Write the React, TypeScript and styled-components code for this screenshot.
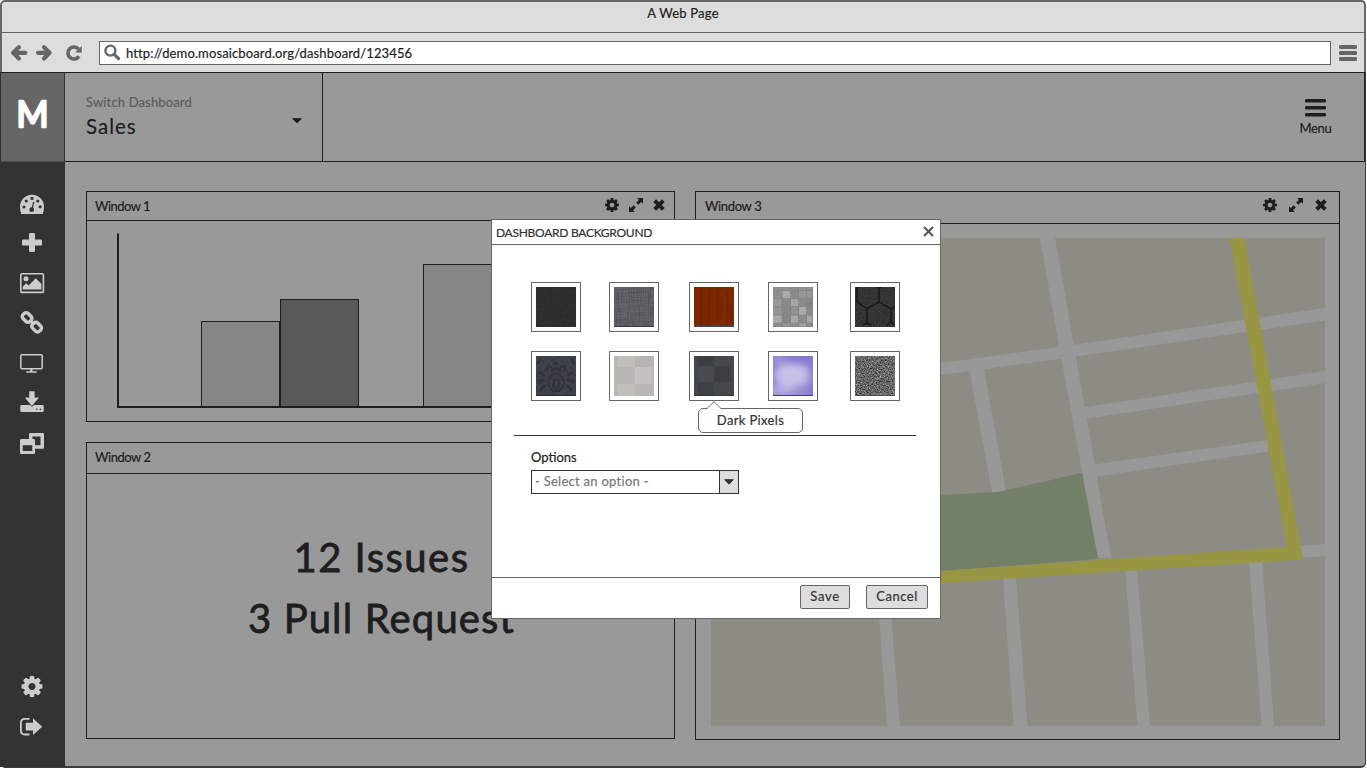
import React from "react";
import styled, { createGlobalStyle } from "styled-components";

const GlobalStyle = createGlobalStyle`
  * { box-sizing: border-box; }
  body { margin: 0; background: #fff; overflow: hidden; }
  svg { display: block; flex: none; }
  filter { color-interpolation-filters: sRGB; }
`;

const ink = "#1e1e1e";

/* ---------- browser frame ---------- */
const Page = styled.div`
  width: 1367px;
  height: 769px;
  position: relative;
  display: flex;
  flex-direction: column;
  font-family: Lato, "Liberation Sans", sans-serif;
  font-size: 13px;
  color: ${ink};
`;
const Chrome = styled.div`
  width: 1366px;
  height: 72px;
  flex: none;
  background: #ddd;
  border: 2px solid #666;
  border-bottom: none;
  border-radius: 5px 5px 0 0;
`;
const TitleBar = styled.div`
  height: 31px;
  border-bottom: 1px solid #666;
  display: flex;
  justify-content: center;
  padding-top: 1px;
`;
const Toolbar = styled.div`
  height: 39px;
  display: flex;
  align-items: center;
  padding: 0 7px 0 9px;
`;
const NavIcons = styled.div`
  display: flex;
  width: 88px;
`;
const UrlBox = styled.div`
  width: 1232px;
  height: 24px;
  margin-right: 8px;
  border: 1px solid #666;
  background: #fff;
  display: flex;
  align-items: center;
  padding-left: 4px;
  gap: 5px;
`;

const Text = styled.span<{ $size?: number; $gap?: number; $color?: string; $stroke?: number }>`
  white-space: pre;
  font-size: ${(p) => p.$size ?? 13}px;
  line-height: 20px;
  letter-spacing: ${(p) => p.$gap ?? 0}px;
  color: ${(p) => p.$color ?? ink};
  -webkit-text-stroke: ${(p) => p.$stroke ?? 0.2}px ${(p) => p.$color ?? ink};
`;

/* ---------- dashboard ---------- */
const Body = styled.div`
  width: 1366px;
  height: 696px;
  display: flex;
  background: #999;
  border-right: 1px solid #3d3d3d;
  border-bottom: 2px solid #3d3d3d;
  border-radius: 0 0 5px 5px;
`;
const Sidebar = styled.div`
  width: 65px;
  height: 695px;
  background: #333;
  display: flex;
  flex-direction: column;
`;
const Logo = styled.div`
  height: 90px;
  background: #666;
  border: 1px solid #333;
  border-top-color: ${ink};
  border-bottom-color: #4d4d4d;
`;
const IconList = styled.div`
  flex: 1;
  display: flex;
  flex-direction: column;
  padding: 22px 0 21px;
`;
const Spacer = styled.div`
  flex: 1;
`;
const Content = styled.div`
  width: 1300px;
  display: flex;
  flex-direction: column;
`;
const Header = styled.div`
  height: 90px;
  display: flex;
  justify-content: space-between;
  border: 1px solid ${ink};
  border-left: none;
`;
const Switcher = styled.div`
  width: 258px;
  border-right: 1px solid ${ink};
  display: flex;
  justify-content: space-between;
  padding: 19px 20px 0 21px;
`;
const Stack = styled.div`
  display: flex;
  flex-direction: column;
  gap: 4px;
`;
const MenuButton = styled.div`
  width: 48px;
  margin-right: 24.5px;
  padding-top: 25.5px;
  display: flex;
  flex-direction: column;
  align-items: center;
  gap: 1.5px;
`;
const Panels = styled.div`
  display: flex;
  gap: 20px;
  padding: 29px 25px 0 21px;
`;
const Column = styled.div<{ $w: number }>`
  width: ${(p) => p.$w}px;
  display: flex;
  flex-direction: column;
  gap: 20px;
`;
const Panel = styled.div<{ $h: number }>`
  height: ${(p) => p.$h}px;
  border: 1px solid ${ink};
`;
const PanelHead = styled.div<{ $h: number; $right: number; $left?: number }>`
  height: ${(p) => p.$h}px;
  border-bottom: 1px solid ${ink};
  display: flex;
  justify-content: space-between;
  padding: 4px ${(p) => p.$right}px 0 ${(p) => p.$left ?? 8}px;
`;
const Tools = styled.div<{ $gap: number }>`
  display: flex;
  gap: ${(p) => p.$gap}px;
  padding-top: 2px;
`;
const Stats = styled.div`
  padding: 53px 0 0 1px;
  width: 588px;
  display: flex;
  flex-direction: column;
  align-items: center;
`;
const Stat = styled.div<{ $gap: number }>`
  height: 61px;
  font-size: 40px;
  line-height: 61px;
  letter-spacing: ${(p) => p.$gap}px;
  -webkit-text-stroke: 0.8px ${ink};
  white-space: pre;
`;
const MapBox = styled.div`
  padding: 14px 0 0 15px;
`;

/* ---------- dialog ---------- */
const Dialog = styled.div`
  position: absolute;
  left: 491px;
  top: 219px;
  width: 450px;
  height: 400px;
  background: #fff;
  border: 1px solid #666;
  display: flex;
  flex-direction: column;
`;
const DialogHead = styled.div`
  height: 25px;
  border-bottom: 1px solid #666;
  display: flex;
  justify-content: space-between;
  padding: 3px 6px 0 4px;
`;
const DialogBody = styled.div`
  flex: 1;
  padding: 37px 24px 0 22px;
`;
const Swatches = styled.div`
  position: relative;
  display: grid;
  grid-template-columns: 78px 80px 79px 82px 50px;
  grid-auto-rows: 50px;
  row-gap: 19px;
  padding-left: 17px;
`;
const Swatch = styled.div`
  width: 50px;
  height: 50px;
  border: 1px solid #666;
  padding: 4px;
`;
const Tooltip = styled.div`
  position: absolute;
  left: 184px;
  top: 126px;
  width: 105px;
  height: 25px;
  border: 1px solid #666;
  border-radius: 5px;
  background: #fff;
  display: flex;
  justify-content: center;
  align-items: center;
  padding-bottom: 1px;
`;
const Pointer = styled.svg`
  position: absolute;
  left: 7px;
  top: -8px;
`;
const Divider = styled.div`
  height: 1px;
  background: #333;
  margin-top: 34px;
`;
const Options = styled.div`
  padding: 11px 0 0 17px;
  display: flex;
  flex-direction: column;
  gap: 3px;
`;
const Select = styled.div`
  width: 208px;
  height: 24px;
  border: 1px solid #333;
  display: flex;
  justify-content: space-between;
  padding-left: 3px;
`;
const SelectButton = styled.div`
  width: 19px;
  border-left: 1px solid #333;
  background: #ddd;
  display: flex;
  align-items: center;
  justify-content: center;
`;
const DialogFoot = styled.div`
  height: 41px;
  border-top: 1px solid #666;
  display: flex;
  justify-content: flex-end;
  gap: 16px;
  padding: 7px 12px 0 0;
`;
const Button = styled.div<{ $w: number }>`
  width: ${(p) => p.$w}px;
  height: 24px;
  border: 1px solid #666;
  border-radius: 2px;
  background: #ddd;
  display: flex;
  justify-content: center;
  align-items: flex-start;
`;

/* ---------- icons ---------- */
const COG =
  "M1024 896q0-106-75-181t-181-75-181 75-75 181 75 181 181 75 181-75 75-181zM1536 787v222q0 12-8 23t-20 13l-185 28q-19 54-39 91 35 50 107 138 10 12 10 25t-9 23q-27 37-99 108t-94 71q-12 0-26-9l-138-108q-44 23-91 38-16 136-29 186-7 28-36 28h-222q-14 0-24.5-8.5t-11.5-21.5l-28-184q-49-16-90-37l-141 107q-10 9-25 9-14 0-25-11-126-114-165-168-7-10-7-23 0-12 8-23 15-21 51-66.5t54-70.5q-27-50-41-99l-183-27q-13-2-21-12.5t-8-23.5v-222q0-12 8-23t19-13l186-28q14-46 39-92-40-57-107-138-10-12-10-24 0-10 9-23 26-36 98.5-107.5t94.5-71.5q13 0 26 10l138 107q44-23 91-38 16-136 29-186 7-28 36-28h222q14 0 24.5 8.5t11.5 21.5l28 184q49 16 90 37l142-107q9-9 24-9 13 0 25 10 129 119 165 170 7 8 7 22 0 12-8 23-15 21-51 66.5t-54 70.5q26 50 41 98l183 28q13 2 21 12.5t8 23.5z";

const Slot = ({ children }: { children: React.ReactNode }) => (
  <svg width="65" height="40" viewBox="0 0 65 40" fill="#ccc">{children}</svg>
);
const Cog = ({ size }: { size: number }) => (
  <svg width={size} height={size} viewBox="0 128 1536 1536"><path d={COG} fill={ink} /></svg>
);
const Expand = () => (
  <svg width="14" height="14" viewBox="0 0 14 14" fill={ink}>
    <path d="M8.2 0H14V5.8L12.1 4.1L9.4 6.8L7.2 4.6L9.9 1.9ZM5.8 14H0V8.2L1.9 9.9L4.6 7.2L6.8 9.4L4.1 12.1Z" />
  </svg>
);
const Cross = () => (
  <svg width="14" height="14" viewBox="0 0 14 14" stroke={ink} strokeWidth="4">
    <path d="M2.7 2.7L11.3 11.3M11.3 2.7L2.7 11.3" />
  </svg>
);
const Caret = ({ color }: { color: string }) => (
  <svg width="10" height="6" viewBox="0 0 10 6" fill={color} stroke={color} strokeLinejoin="round">
    <path d="M.7 .7H9.3L5 5.2Z" />
  </svg>
);
const Bars = ({ w, h, step, thick, color }: { w: number; h: number; step: number; thick: number; color: string }) => (
  <svg width={w} height={h} fill={color}>
    {[0, 1, 2].map((i) => <rect key={i} x="0" y={i * step} width={w} height={thick} rx="1.3" />)}
  </svg>
);

const SidebarIcons = () => (
  <IconList>
    <Slot>
      <path d="M21.3 30Q20 27 20 22.7A12 12 0 0 1 44 22.7Q44 27 42.7 30Z" />
      <g fill="#333">
        <circle cx="24" cy="23" r="1.6" /><circle cx="26.2" cy="17" r="1.6" /><circle cx="32" cy="14.4" r="1.6" />
        <circle cx="37.8" cy="17" r="1.6" /><circle cx="40.2" cy="22.8" r="1.6" /><circle cx="31.7" cy="25.7" r="2.4" />
        <path d="M31.7 25.7L33.7 18.3" stroke="#333" strokeWidth="1.2" strokeLinecap="round" />
      </g>
    </Slot>
    <Slot>
      <rect x="22" y="15.5" width="20" height="6" rx="1.2" /><rect x="29" y="9" width="6" height="19" rx="1.2" />
    </Slot>
    <Slot>
      <rect x="20.8" y="9.8" width="22.6" height="18.6" rx="1.2" fill="none" stroke="#ccc" strokeWidth="1.6" />
      <circle cx="26" cy="14.8" r="2.5" />
      <path d="M22.7 25.4V22.7L26 19.2L28.7 21.5L35.7 14.3L41.4 20V25.4Z" />
    </Slot>
    <Slot>
      <g fill="none" stroke="#ccc" strokeWidth="3.4">
        <rect x="-4.9" y="-3.6" width="9.8" height="7.2" rx="2.8" transform="translate(27.1 13.5) rotate(45)" />
        <rect x="-4.9" y="-3.6" width="9.8" height="7.2" rx="2.8" transform="translate(36.6 23.1) rotate(45)" />
        <path d="M29.5 16L34.3 20.8" strokeWidth="2.6" />
      </g>
    </Slot>
    <Slot>
      <rect x="20.8" y="10.8" width="21.4" height="14" rx="1.2" fill="none" stroke="#ccc" strokeWidth="1.5" />
      <rect x="30.3" y="25" width="2.2" height="3" /><rect x="26" y="27.2" width="11" height="1.6" rx=".8" />
    </Slot>
    <Slot>
      <rect x="20.3" y="21" width="23.4" height="7" rx="1.3" />
      <path d="M29 7.2H34.8V13.4H39L32 21.3L25 13.4H29Z" stroke="#333" strokeWidth="2.4" />
      <path d="M29.2 7.2H34.6V13.4H39L31.9 22L24.8 13.4H29.2Z" />
      <circle cx="36.9" cy="25.2" r=".8" fill="#333" /><circle cx="40.4" cy="25.2" r=".8" fill="#333" />
    </Slot>
    <Slot>
      <path fillRule="evenodd" d="M30.2 9H42.8Q44 9 44 10.2V23.6Q44 24.8 42.8 24.8H30.2Q29 24.8 29 23.6V10.2Q29 9 30.2 9ZM32.5 12.6V21.2H40.5V12.6Z" />
      <path d="M21.2 15H33.8Q35 15 35 16.2V28.8Q35 30 33.8 30H21.2Q20 30 20 28.8V16.2Q20 15 21.2 15Z" />
      <rect x="22.7" y="21.2" width="9.6" height="5.8" fill="#333" />
    </Slot>
    <Spacer />
    <Slot>
      <svg x="21.3" y="9.8" width="21.4" height="21.4" viewBox="0 128 1536 1536"><path d={COG} /></svg>
    </Slot>
    <Slot>
      <path d="M29.5 12.8H25Q20.9 12.8 20.9 16.8V24.5Q20.9 28.5 25 28.5H29.5" fill="none" stroke="#ccc" strokeWidth="1.8" />
      <path d="M25.8 17.3Q25.8 16.8 26.3 16.8H33V12.2L42.2 20.7L33 29V24.6H26.3Q25.8 24.6 25.8 24Z" />
    </Slot>
  </IconList>
);

const Chart = () => (
  <svg width="587" height="199" viewBox="87 221 587 199">
    <g stroke={ink}>
      <rect x="201.5" y="321.5" width="78" height="85" fill="#868686" />
      <rect x="280.5" y="299.5" width="78" height="107" fill="#595959" />
      <rect x="423.5" y="264.5" width="78" height="142" fill="#868686" />
    </g>
    <path d="M118 233.5V407H650" fill="none" stroke={ink} strokeWidth="2" />
  </svg>
);

const CityMap = () => (
  <svg width="614" height="488" viewBox="711 238 614 488">
    <rect x="711" y="238" width="614" height="488" fill="#8c8b84" />
    <g fill="#989898">
      <path d="M1040 238H1055L1074 346L1111 558H1098L1059 346Z" />
      <path d="M711 394L941 363L1059 347L1325 308V320.5L1059 359L941 375L711 406Z" />
      <path d="M1082 407.5L1325 371V383L1084 419Z" />
      <path d="M1090 465L1268 440V451.5L1092 477Z" />
      <path d="M969 368H984L1006 492H992Z" />
      <path d="M1003 577H1016L1027.5 726H1013.5Z" />
      <path d="M1125 568H1137L1150 726H1137.5Z" />
      <path d="M1249 559H1262L1274 726H1261.5Z" />
      <path d="M877 590H889L900 726H887Z" />
      <path d="M1300 546L1325 544V556L1300 558Z" />
    </g>
    <path d="M711 505L941 495L998 492L1082 473L1098 559L941 571L711 587Z" fill="#728068" />
    <path d="M1229.5 238H1244.5L1303 559.5L941 583L711 598V587L941 571L1287 547Z" fill="#999643" />
  </svg>
);

/* ---------- background previews ---------- */
const Grain = ({ id, freq, amount, seed = 1 }: { id: string; freq: string; amount: number; seed?: number }) => (
  <>
    <filter id={id} x="0" y="0" width="100%" height="100%">
      <feTurbulence type="fractalNoise" baseFrequency={freq} numOctaves="2" seed={seed} />
      <feColorMatrix values="1.6 0 0 0 -.3  1.6 0 0 0 -.3  1.6 0 0 0 -.3  0 0 0 0 1" />
    </filter>
    <rect width="40" height="40" filter={`url(#${id})`} opacity={amount} />
  </>
);
const Preview = ({ bg, children }: { bg: string; children?: React.ReactNode }) => (
  <Swatch>
    <svg width="40" height="40" viewBox="0 0 40 40">
      <rect width="40" height="40" fill={bg} />
      {children}
    </svg>
  </Swatch>
);
const Cells = ({ cells }: { cells: [number, number, number, number, string][] }) => (
  <>{cells.map(([x, y, w, h, c], i) => <rect key={i} x={x} y={y} width={w} height={h} fill={c} />)}</>
);
const tileShades = [
  "#909090", "#929292", "#8d8d8d", "#959595", "#909090",
  "#8f8f8f", "#adadad", "#8c8c8c", "#999", "#989898",
  "#9c9c9c", "#8b8b8b", "#a9a9a9", "#8c8c8c", "#858585",
  "#959595", "#8a8a8a", "#929292", "#aeaeae", "#8b8b8b",
  "#adadad", "#888", "#acacac", "#8d8d8d", "#aaa",
  "#8d8d8d", "#999", "#909090", "#a6a6a6", "#8e8e8e",
];
const tileX = [0, 9.5, 18, 26, 34, 40];
const tileY = [0, 4, 12, 20, 28.5, 36.5, 40];

const Previews = () => (
  <>
    <Preview bg="#292929"><Grain id="g1" freq=".8" amount={0.06} /></Preview>
    <Preview bg="#57575f">
      <Grain id="g2" freq=".06 .9" amount={0.08} /><Grain id="g3" freq=".9 .06" amount={0.08} />
      <rect y="39" width="40" height="1" fill="#36363c" />
    </Preview>
    <Preview bg="#7c2700">
      <path d="M7 0V38M15 6V38M16 0V20M24 0V30M33 4V38M28 10V25M37 18V36" stroke="#5f1d00" opacity=".45" />
      <path d="M4 0V38M12 0V24M20 5V38M30 0V38" stroke="#8b3000" opacity=".5" />
      <rect y="38" width="40" height="2" fill="#454248" />
    </Preview>
    <Preview bg="#858585">
      <Cells cells={tileShades.map((c, i) => {
        const col = i % 5, row = Math.floor(i / 5);
        return [tileX[col], tileY[row], tileX[col + 1] - tileX[col] - 0.8, tileY[row + 1] - tileY[row] - 0.8, c];
      })} />
      <Grain id="g5" freq=".8" amount={0.05} />
    </Preview>
    <Preview bg="#2d2d2d">
      <Grain id="g6" freq=".7" amount={0.09} />
      <path d="M2 0V15L12 21.5L24 15V1L22 0M24 1L26 0M12 21.5V36L8 38M12 36L16 38M24 15L36 22V35L32 38M36 35L39 38M36 22L40 19" fill="none" stroke="#171717" strokeWidth="1.4" />
    </Preview>
    <Preview bg="#3a3d44">
      <Grain id="g7" freq=".35" amount={0.05} />
      <g fill="none" stroke="#2a2d34" strokeWidth="1.7" opacity=".7">
        <path d="M20 17C10 20 11 31 17 35H23C29 31 30 20 20 17ZM20 23C16 25 16 31 20 33C24 31 24 25 20 23Z" />
        <path d="M12 15C9 11 14 8 15 12M28 15C31 11 26 8 25 12M18 9Q20 5 22 9M15 15L20 12L25 15M9 20L3 16M9 24L2 25M10 29L4 34M31 20L37 16M31 24L38 25M30 29L36 34M2 8L5 3M38 8L35 3" strokeWidth="2.4" />
      </g>
      <rect y="39" width="40" height="1" fill="#25272c" />
    </Preview>
    <Preview bg="#bcbab7">
      <Cells cells={[[4, 0, 17, 11, "#c3c1be"], [21, 0, 17, 11, "#b8b6b3"], [0, 11, 21, 17, "#bbb9b5"], [21, 11, 17, 17, "#c6c4c1"], [4, 28, 17, 12, "#c3c1be"], [21, 28, 17, 12, "#bbb9b6"]]} />
      <Grain id="g8" freq=".8" amount={0.02} />
    </Preview>
    <Preview bg="#44474a">
      <Cells cells={[[4, 0, 16, 10, "#3b3e41"], [20, 0, 16, 10, "#46494c"], [4, 10, 16, 16, "#474b4e"], [20, 10, 16, 16, "#3b3e40"], [4, 26, 16, 14, "#3e4144"], [0, 39, 40, 1, "#333639"]]} />
      <Grain id="g9" freq=".7" amount={0.02} />
    </Preview>
    <Preview bg="#8779cf">
      <filter id="cloud" x="-30%" y="-30%" width="160%" height="160%"><feGaussianBlur stdDeviation="3.5" /></filter>
      <g filter="url(#cloud)" fill="#c6c0e8">
        <ellipse cx="18" cy="19" rx="17" ry="12" /><ellipse cx="10" cy="34" rx="14" ry="6" opacity=".7" /><ellipse cx="31" cy="20" rx="8" ry="12" opacity=".5" />
        <ellipse cx="5" cy="4" rx="8" ry="5" opacity=".4" /><ellipse cx="30" cy="37" rx="6" ry="3" opacity=".5" />
      </g>
      <rect y="39" width="40" height="1" fill="#43406a" />
    </Preview>
    <Preview bg="#5c5c5c">
      <filter id="static" x="0" y="0" width="100%" height="100%">
        <feTurbulence type="fractalNoise" baseFrequency=".75" numOctaves="2" seed="7" />
        <feColorMatrix values="1.6 0 0 0 -.35  1.6 0 0 0 -.35  1.6 0 0 0 -.35  0 0 0 0 1" />
      </filter>
      <rect width="40" height="40" filter="url(#static)" opacity=".5" />
      <rect y="39" width="40" height="1" fill="#444" opacity=".6" />
    </Preview>
  </>
);

export default function App() {
  return (
    <Page>
      <GlobalStyle />
      <Chrome>
        <TitleBar><Text $gap={0.22}>A Web Page</Text></TitleBar>
        <Toolbar>
          <NavIcons>
            <svg width="75" height="18" viewBox="0 0 75 18" fill="none" stroke="#666">
              <path d="M14.4 8.8H4M7.8 3.2L2.2 8.8L7.8 14.4" strokeWidth="4.2" strokeLinecap="round" strokeLinejoin="round" />
              <path d="M27 8.8H37M33 3.2L38.6 8.8L33 14.4" strokeWidth="4.2" strokeLinecap="round" strokeLinejoin="round" />
              <path d="M67.6 5.2A6 6 0 1 0 68 12.2" strokeWidth="3.6" />
              <path d="M70.8 2V8.6H64Z" fill="#666" stroke="none" />
            </svg>
          </NavIcons>
          <UrlBox>
            <svg width="17" height="17" viewBox="0 0 17 17" fill="none" stroke="#666">
              <circle cx="6.4" cy="6.6" r="5" strokeWidth="2.4" />
              <path d="M10.2 10.3L14.6 14.6" strokeWidth="3.2" strokeLinecap="round" />
            </svg>
            <Text $gap={0.13}>http://demo.mosaicboard.org/dashboard/123456</Text>
          </UrlBox>
          <Bars w={18} h={16} step={6} thick={4} color="#666" />
        </Toolbar>
      </Chrome>
      <Body>
        <Sidebar>
          <Logo>
            <svg width="63" height="88" viewBox="1 73 63 88">
              <text x="32.5" y="127.3" textAnchor="middle" textLength="32" lengthAdjust="spacingAndGlyphs" fontFamily="Lato, sans-serif" fontSize="37" fill="#fff" stroke="#fff" strokeWidth="2.6" strokeLinejoin="round">M</text>
            </svg>
          </Logo>
          <SidebarIcons />
        </Sidebar>
        <Content>
          <Header>
            <Switcher>
              <Stack>
                <Text $gap={0.15} $color="#5c5c5c">Switch Dashboard</Text>
                <Text $size={20.5} $gap={1}>Sales</Text>
              </Stack>
              <svg width="10" height="32" viewBox="0 0 10 32"><path d="M.7 26.7H9.3L5 31Z" fill={ink} stroke={ink} strokeLinejoin="round" /></svg>
            </Switcher>
            <MenuButton>
              <Bars w={21} h={18} step={7} thick={3.6} color={ink} />
              <Text $gap={-0.3}>Menu</Text>
            </MenuButton>
          </Header>
          <Panels>
            <Column $w={589}>
              <Panel $h={231}>
                <PanelHead $h={29} $right={8}>
                  <Text $gap={-0.5}>Window 1</Text>
                  <Tools $gap={9.5}><Cog size={14} /><Expand /><Cross /></Tools>
                </PanelHead>
                <Chart />
              </Panel>
              <Panel $h={297}>
                <PanelHead $h={31} $right={8}><Text $gap={-0.45}>Window 2</Text></PanelHead>
                <Stats>
                  <Stat $gap={1.5}>12 Issues</Stat>
                  <Stat $gap={1.15}>3 Pull Request</Stat>
                </Stats>
              </Panel>
            </Column>
            <Column $w={645}>
              <Panel $h={549}>
                <PanelHead $h={32} $right={11} $left={9}>
                  <Text $gap={-0.35}>Window 3</Text>
                  <Tools $gap={11.5}><Cog size={14} /><Expand /><Cross /></Tools>
                </PanelHead>
                <MapBox><CityMap /></MapBox>
              </Panel>
            </Column>
          </Panels>
        </Content>
      </Body>
      <Dialog>
        <DialogHead>
          <Text $size={12} $gap={-0.27} $color="#333">DASHBOARD BACKGROUND</Text>
          <svg width="11" height="20" viewBox="0 0 11 20" stroke="#555" strokeWidth="2"><path d="M1 4L10 13M10 4L1 13" /></svg>
        </DialogHead>
        <DialogBody>
          <Swatches>
            <Previews />
            <Tooltip>
              <Pointer width="17" height="9" viewBox="0 0 17 9"><path d="M0 8.5L8 .7L16 8.5" fill="#fff" stroke="#777" /><path d="M1 8.8H15" stroke="#fff" /></Pointer>
              <Text $gap={0.35} $color="#333">Dark Pixels</Text>
            </Tooltip>
          </Swatches>
          <Divider />
          <Options>
            <Text $color="#222">Options</Text>
            <Select>
              <Text $gap={0.27} $color="#777781">- Select an option -</Text>
              <SelectButton><Caret color="#333" /></SelectButton>
            </Select>
          </Options>
        </DialogBody>
        <DialogFoot>
          <Button $w={50}><Text $gap={0.7} $color="#333">Save</Text></Button>
          <Button $w={62}><Text $gap={0.5} $color="#333">Cancel</Text></Button>
        </DialogFoot>
      </Dialog>
    </Page>
  );
}
